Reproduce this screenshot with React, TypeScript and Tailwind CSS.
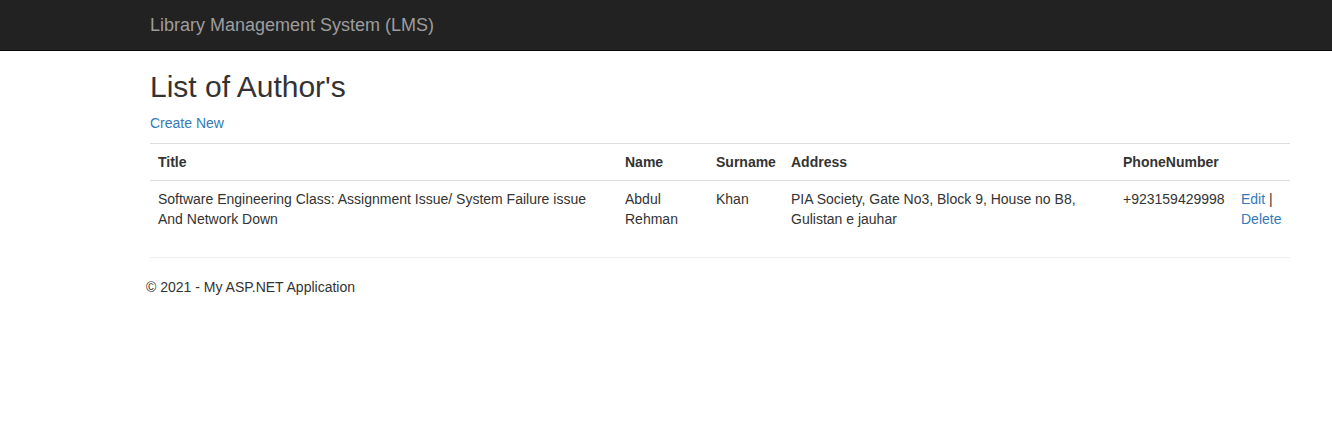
const rows = [
  {
    title: 'Software Engineering Class: Assignment Issue/ System Failure issue And Network Down',
    name: 'Abdul Rehman',
    surname: 'Khan',
    address: 'PIA Society, Gate No3, Block 9, House no B8, Gulistan e jauhar',
    phone: '+923159429998',
  },
]

export default function App() {
  return (
    <div className="min-h-[440px] bg-white font-['Liberation_Sans',Arial,sans-serif] text-[14px] leading-[20px] text-[#333]">
      <div className="h-[51px] border-b border-[#080808] bg-[#222]">
        <div className="ml-[150px] w-[1140px]">
          <a className="block py-[15px] text-[18px] leading-[20px] text-[#9d9d9d]" href="#">
            Library Management System (LMS)
          </a>
        </div>
      </div>
      <div className="-mt-px ml-[150px] w-[1140px]">
        <h2 className="mt-[20px] mb-[10px] text-[30px] leading-[33px] font-medium">List of Author's</h2>
        <p className="mb-[10px]">
          <a className="text-[#337ab7]" href="#">
            Create New
          </a>
        </p>
        <table className="w-full table-fixed border-collapse">
          <tbody>
            <tr>
              <th className="w-[467px] border-t border-[#ddd] p-[8px] text-left font-bold">Title</th>
              <th className="w-[91px] border-t border-[#ddd] p-[8px] text-left font-bold">Name</th>
              <th className="w-[75px] border-t border-[#ddd] p-[8px] text-left font-bold">Surname</th>
              <th className="w-[332px] border-t border-[#ddd] p-[8px] text-left font-bold">Address</th>
              <th className="w-[118px] border-t border-[#ddd] p-[8px] text-left font-bold">PhoneNumber</th>
              <th className="border-t border-[#ddd] p-[8px]"></th>
            </tr>
            {rows.map((r) => (
              <tr key={r.phone}>
                <td className="border-t border-[#ddd] p-[8px] align-top">{r.title}</td>
                <td className="border-t border-[#ddd] p-[8px] align-top">{r.name}</td>
                <td className="border-t border-[#ddd] p-[8px] align-top">{r.surname}</td>
                <td className="border-t border-[#ddd] p-[8px] align-top">{r.address}</td>
                <td className="border-t border-[#ddd] p-[8px] align-top">{r.phone}</td>
                <td className="border-t border-[#ddd] p-[8px] align-top">
                  <a className="text-[#337ab7]" href="#">
                    Edit
                  </a>{' '}
                  |{' '}
                  <a className="text-[#337ab7]" href="#">
                    Delete
                  </a>
                </td>
              </tr>
            ))}
          </tbody>
        </table>
        <hr className="mt-[20px] mb-[19px] border-t border-[#eee]" />
        <footer className="-ml-[4px]">
          <p>© 2021 - My ASP.NET Application</p>
        </footer>
      </div>
    </div>
  )
}
